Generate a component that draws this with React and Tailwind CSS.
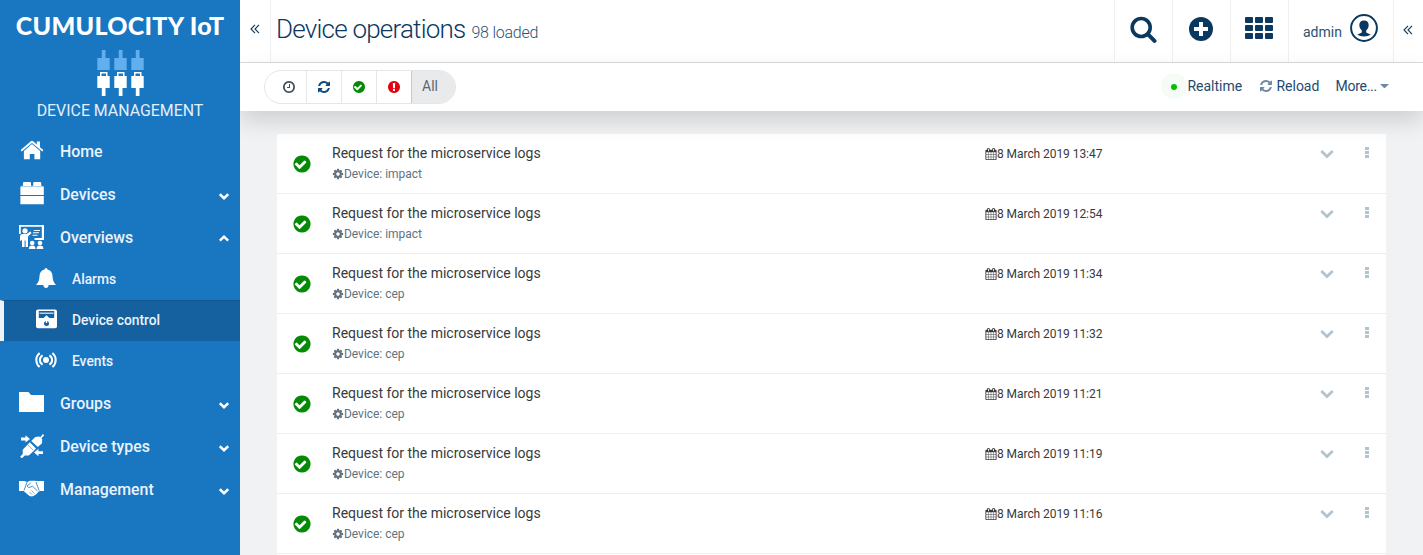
import React from "react";

const PATHS = {
  check:
    "M1284 734q0-28-18-46l-91-90q-19-19-45-19t-45 19l-408 407-226-226q-19-19-45-19t-45 19l-91 90q-18 18-18 46 0 27 18 45l362 362q19 19 45 19 27 0 46-19l543-543q18-18 18-45zm380 162q0 209-103 385.5t-279.5 279.5-385.5 103-385.5-103-279.5-279.5-103-385.5 103-385.5 279.5-279.5 385.5-103 385.5 103 279.5 279.5 103 385.5z",
  refresh:
    "M1639 1056q0 5-1 7-64 268-268 434.5t-478 166.5q-146 0-282.5-55t-243.5-157l-129 129q-19 19-45 19t-45-19-19-45v-448q0-26 19-45t45-19h448q26 0 45 19t19 45-19 45l-137 137q71 66 161 102t187 36q134 0 250-65t186-179q11-17 53-117 8-23 30-23h192q13 0 22.5 9.5t9.5 22.5zm25-800v448q0 26-19 45t-45 19h-448q-26 0-45-19t-19-45 19-45l138-138q-148-137-349-137-134 0-250 65t-186 179q-11 17-53 117-8 23-30 23h-199q-13 0-22.5-9.5t-9.5-22.5v-7q65-268 270-434.5t480-166.5q146 0 284 55.5t245 156.5l130-129q19-19 45-19t45 19 19 45z",
  alert:
    "M896 128q209 0 385.5 103t279.5 279.5 103 385.5-103 385.5-279.5 279.5-385.5 103-385.5-103-279.5-279.5-103-385.5 103-385.5 279.5-279.5 385.5-103zm128 1247v-190q0-14-9-23.5t-22-9.500h-192q-13 0-23 10t-10 23v190q0 13 10 23t23 10h192q13 0 22-9.500t9-23.500zm-2-344l18-621q0-12-10-18-10-8-24-8h-220q-14 0-24 8-10 6-10 18l17 621q0 10 10 17.500t24 7.500h185q14 0 23.500-7.500t10.500-17.500z",
  clock:
    "M1024 544v448q0 14-9 23t-23 9h-320q-14 0-23-9t-9-23v-64q0-14 9-23t23-9h224v-352q0-14 9-23t23-9h64q14 0 23 9t9 23zm416 352q0-148-73-273t-198-198-273-73-273 73-198 198-73 273 73 273 198 198 273 73 273-73 198-198 73-273zm224 0q0 209-103 385.5t-279.5 279.5-385.5 103-385.5-103-279.5-279.5-103-385.5 103-385.5 279.5-279.5 385.5-103 385.5 103 279.5 279.5 103 385.5z",
  cog: "M1152 896q0-106-75-181t-181-75-181 75-75 181 75 181 181 75 181-75 75-181zm512-109v222q0 12-8 23t-20 13l-185 28q-19 54-39 91 35 50 107 138 10 12 10 25t-9 23q-27 37-99 108t-94 71q-12 0-26-9l-138-108q-44 23-91 38-16 136-29 186-7 28-36 28h-222q-14 0-24.5-8.5t-11.5-21.5l-28-184q-49-16-90-37l-141 107q-10 9-25 9-14 0-25-11-126-114-165-168-7-10-7-23 0-12 8-23 15-21 51-66.5t54-70.5q-27-50-41-99l-183-27q-13-2-21-12.5t-8-23.5v-222q0-12 8-23t19-13l186-28q14-46 39-92-40-57-107-138-10-12-10-24 0-10 9-23 26-36 98.5-107.5t94.5-71.5q13 0 26 10l138 107q44-23 91-38 16-136 29-186 7-28 36-28h222q14 0 24.5 8.5t11.5 21.5l28 184q49 16 90 37l142-107q9-9 24-9 13 0 25 10 129 119 165 170 7 8 7 22 0 12-8 23-15 21-51 66.5t-54 70.5q26 50 41 98l183 28q13 2 21 12.5t8 23.5z",
  calendar:
    "M192 1664h288v-288h-288v288zm352 0h320v-288h-320v288zm-352-352h288v-320h-288v320zm352 0h320v-320h-320v320zm-352-384h288v-288h-288v288zm736 736h320v-288h-320v288zm-384-736h320v-288h-320v288zm768 736h288v-288h-288v288zm-384-352h320v-320h-320v320zm-352-864v-288q0-13-9.5-22.5t-22.5-9.5h-64q-13 0-22.5 9.5t-9.5 22.5v288q0 13 9.5 22.5t22.5 9.5h64q13 0 22.5-9.5t9.5-22.5zm736 864h288v-320h-288v320zm-384-384h320v-288h-320v288zm384 0h288v-288h-288v288zm32-480v-288q0-13-9.5-22.5t-22.5-9.5h-64q-13 0-22.5 9.5t-9.5 22.5v288q0 13 9.5 22.5t22.5 9.5h64q13 0 22.5-9.5t9.5-22.5zm384-64v1280q0 52-38 90t-90 38h-1408q-52 0-90-38t-38-90v-1280q0-52 38-90t90-38h128v-96q0-66 47-113t113-47h64q66 0 113 47t47 113v96h384v-96q0-66 47-113t113-47h64q66 0 113 47t47 113v96h128q52 0 90 38t38 90z",
};

const Glyph = ({ name, className }) => (
  <svg viewBox="0 0 1792 1792" fill="currentColor" className={className}>
    <path d={PATHS[name]} />
  </svg>
);

const Chevron = ({ up }) => (
  <svg viewBox="0 0 10 8" className="h-2 w-2.5" fill="none" stroke="currentColor" strokeWidth="2.500">
    <path d={up ? "M.8 5.700 5 1.700l4.200 4" : "M.8 2.200 5 6.200l4.200-4"} />
  </svg>
);

const DoubleAngle = () => (
  <svg viewBox="0 0 10 10" className="h-2.5 w-2.5" fill="none" stroke="currentColor" strokeWidth="1.1">
    <path d="M5 .8 1 5l4 4.200M9 .8 5 5l4 4.200" />
  </svg>
);

const Svg24 = ({ children, className = "size-6" }) => (
  <svg viewBox="0 0 24 24" className={className} fill="currentColor">
    {children}
  </svg>
);

const HomeIcon = () => (
  <Svg24>
    <path d="M.6 11.100 10.600 2.400Q12 1.300 13.400 2.400L16.800 5.400V2.500h3.200v5.700l3.400 2.900-1.100 1.400L12 3.900 1.700 12.500z" />
    <path d="M12 5.100 20.200 12v8.300h-5.800v-5.200H9.800v5.200H3.900V12z" />
  </Svg24>
);

const DevicesIcon = () => (
  <Svg24>
    <path d="M3 4V1q0-1 1-1h6q1 0 1 1v3zM13.200 4V1q0-1 1-1h6q1 0 1 1v3z" />
    <path d="M.4 4.600h23.400V13H.4zM.4 13.900h23.400v8.300H.4z" />
    <path d="M1.500 3.600h21v1H1.500z" opacity=".55" />
  </Svg24>
);

const OverviewsIcon = () => (
  <svg viewBox="0 0 25 24" className="-ml-px h-6 w-[25px]" fill="currentColor">
    <path d="M0 0h25v1.800H0zM0 0h1.800v9H0zM22.800 0H25v15h-9.500v-2h7.300z" />
    <circle cx="6" cy="5.800" r="2.600" />
    <path d="M1 11.800q0-2.600 2.600-2.800h4l3.700-2.600 1.300 1.600L9 11.500V22H6.600v-6.500h-1V22H3v-7L1 16z" />
    <path d="M14.800 5H21v1h-6.200zM14 7.300h6v1h-6zM13.500 9.800h5v1h-5z" />
    <circle cx="13.200" cy="18" r="2.300" />
    <circle cx="21" cy="18" r="2.300" />
    <path d="M9.800 24q0-3.400 3.400-3.400t3.400 3.400zM17.600 24q0-3.400 3.400-3.400t3.400 3.400z" />
  </svg>
);

const BellIcon = () => (
  <svg viewBox="0 0 20 20" className="size-5" fill="currentColor">
    <path d="M10 0q1.300 0 1.500 1.500 4.700 1.100 5 6.500.3 6.200 3.100 8.200v.9H.4v-.9Q3.200 14.200 3.500 8q.3-5.400 5-6.500Q8.700 0 10 0zM7.300 17h5.400Q12.300 20 10 20t-2.700-3z" />
  </svg>
);

const ControlIcon = () => (
  <svg viewBox="0 0 21 20" className="h-5 w-[21px]">
    <rect x="0" y=".5" width="21" height="18.800" rx="2" fill="currentColor" />
    <path d="M2.800 2h15.400v7h-4.700L10.500 6.500 7.500 9H2.800z" fill="#1561a0" />
    <path d="M3.500 3.500h14V5h-14z" fill="currentColor" opacity=".7" />
    <path d="M10.500 6.300l2 3h-4z" fill="currentColor" />
    <circle cx="10.500" cy="14.500" r="2.500" fill="#1561a0" />
    <path d="M9.800 12h1.400v2H9.800z" fill="currentColor" />
  </svg>
);

const EventsIcon = () => (
  <svg viewBox="0 0 22 16" className="h-4 w-[22px]" fill="none" stroke="currentColor" strokeWidth="2">
    <circle cx="11" cy="8" r="3" fill="currentColor" stroke="none" />
    <path d="M7.600 3.300Q4.900 5 4.900 8t2.700 4.700M14.400 3.300Q17.100 5 17.100 8t-2.700 4.700M4.600.9Q1.300 3.700 1.300 8t3.300 7.100M17.400.9q3.300 2.800 3.300 7.100t-3.300 7.100" />
  </svg>
);

const FolderIcon = () => (
  <svg viewBox="0 0 25 20" className="-mt-0.5 -ml-px h-5 w-[25px]" fill="currentColor">
    <path d="M0 0h9.500L12 3h13v17H0z" />
  </svg>
);

const TypesIcon = () => (
  <Svg24>
    <path d="M1 3.500h4.500V1.200L10 5 5.500 8.600V6.400H1zM23 17.200h-4.500v-2.500L14 18.500l4.500 3.700V20H23z" />
    <path d="M22.900 0l1.300 1.300-2.800 3 .8 1-.2 4-4.200 3.800L11.200 7 15.300 2.900l4-.3 1 .7zM9.800 8.300l6.200 6.200-2.600 2.800L8.800 21.500l-4-.1-3 2.900L.2 22.800l2.600-3-.1-4z" />
    <path d="M10.800 7.300l5.900 6" stroke="#1976c1" strokeWidth=".8" />
    <path d="M8 11l5 5" stroke="#1976c1" strokeWidth=".5" />
  </Svg24>
);

const HandshakeIcon = () => (
  <svg viewBox="0 0 25 17" className="-ml-px h-[17px] w-[25px]" fill="currentColor">
    <path d="M0 1h5.500l2.700.9L11 .8h3.500L19.500 1H25v10h-3.500l-2 .8-2.200 2.400-2 1.200-2.300 1L10.500 16 4.500 11H0z" />
    <g fill="none" stroke="#1976c1" strokeWidth=".8">
      <path d="M8.200 1.900 5 10.500M17 2l3.200 8.700M11.800 2.800 8 6q1.500 2.400 3.800 1l1.700-.8 5 4.800" />
      <path d="M12.500 10.500l3 3M10.500 12l2.700 2.700" strokeWidth=".6" />
    </g>
    <path d="M0 11h4.200l5 5.500H0zM25 11h-3.800L16 17h9z" fill="#1976c1" />
  </svg>
);

const Plug = () => (
  <svg viewBox="0 0 13 46" className="h-[46px] w-[13px]">
    <path d="M4.800 0h3.700v8h4.200v12H.3V8h4.500z" fill="#61afee" />
    <path d="M3 22h7.500v4h2.200v12H8.500v8H4.800v-8H.3V26H3zM4.500 23.500V26H9v-2.500z" fill="#fff" fillRule="evenodd" />
  </svg>
);

const NavItem = ({ icon, label, chevron }) => (
  <div className="flex h-[43px] items-center pr-[11px] pl-5">
    <span className="flex w-10 items-center pb-0.5 text-white">{icon}</span>
    <span className="flex-1 text-[15.900px] leading-6 font-medium tracking-[-0.02px]">{label}</span>
    {chevron && (
      <span className="pt-[3px] text-white">
        <Chevron up={chevron === "up"} />
      </span>
    )}
  </div>
);

const SubItem = ({ icon, label, active }) => (
  <div
    className={
      active
        ? "flex h-[41px] items-center border-t border-l-4 border-t-[#125690] border-l-[#eef2f5] bg-[#1561a0] pb-0.5"
        : "flex h-[41px] items-center border-l-4 border-transparent pb-px"
    }
  >
    <span className="flex w-[68px] justify-center pl-4">
      <span className="flex w-[52px] justify-center pb-[3px] text-white">{icon}</span>
    </span>
    <span className="text-[13.800px] font-medium">{label}</span>
  </div>
);

const Sidebar = () => (
  <aside className="flex h-full w-60 shrink-0 flex-col bg-[#1976c1] text-[#eaf3fb]">
    <div className="flex h-[130px] flex-col items-center text-white">
      <div className="mt-2 h-[34px] text-[25px] leading-[34px] font-black tracking-[0.29px] whitespace-nowrap text-white [font-family:Lato,sans-serif]">
        CUMULOCITY IoT
      </div>
      <div className="mt-2 flex gap-1">
        <Plug />
        <Plug />
        <Plug />
      </div>
      <div className="mt-[5px] text-[15.900px] leading-5 whitespace-nowrap text-[#e4effa]">DEVICE MANAGEMENT</div>
    </div>
    <NavItem icon={<HomeIcon />} label="Home" />
    <NavItem icon={<DevicesIcon />} label="Devices" chevron="down" />
    <NavItem icon={<OverviewsIcon />} label="Overviews" chevron="up" />
    <SubItem icon={<BellIcon />} label="Alarms" />
    <SubItem icon={<ControlIcon />} label="Device control" active />
    <SubItem icon={<EventsIcon />} label="Events" />
    <NavItem icon={<FolderIcon />} label="Groups" chevron="down" />
    <NavItem icon={<TypesIcon />} label="Device types" chevron="down" />
    <NavItem icon={<HandshakeIcon />} label="Management" chevron="down" />
  </aside>
);

const Header = () => (
  <header className="flex h-[63px] shrink-0 border-b border-[#d9dcde] bg-white text-[#0b385f]">
    <div className="flex w-[31px] items-center justify-center border-r border-[#eeeff0] pb-[5px]">
      <DoubleAngle />
    </div>
    <div className="flex flex-1 items-baseline pt-[13px] pl-[5px] whitespace-nowrap">
      <h1 className="text-[26px] leading-8 font-light tracking-[-0.78px]">Device operations</h1>
      <span className="ml-[6px] text-base font-light tracking-[-0.24px] text-[#2c5375]">98 loaded</span>
    </div>
    <div className="flex w-[58px] items-center justify-center border-l border-[#eeeff0] pr-px pb-[3px]">
      <svg viewBox="0 0 27 27" className="size-[27px]" fill="none" stroke="currentColor">
        <circle cx="11.200" cy="11.500" r="9" strokeWidth="3.600" />
        <path d="M17.800 18.200l6.700 6.700" strokeWidth="4" strokeLinecap="round" />
      </svg>
    </div>
    <div className="flex w-[58px] items-center justify-center border-l border-[#eeeff0] pr-0.5 pb-1">
      <svg viewBox="0 0 24 24" className="size-6">
        <circle cx="12" cy="12" r="12" fill="currentColor" />
        <path d="M12 5v14M5 12h14" stroke="#fff" strokeWidth="4" />
      </svg>
    </div>
    <div className="flex w-[58px] items-center justify-center border-l border-[#eeeff0] pr-px pb-[6px]">
      <svg viewBox="0 0 28 22" className="h-[22px] w-7" fill="currentColor">
        {[0, 8, 16].map((y) => [0, 10, 20].map((x) => <rect key={x + "-" + y} x={x} y={y} width="8" height="6" rx="1" />))}
      </svg>
    </div>
    <div className="flex w-[105px] items-center border-l border-[#eeeff0] pb-[6px] pl-3.5">
      <span className="w-[47px] pt-2 text-sm text-[#2c5375]">admin</span>
      <svg viewBox="0 0 28 28" className="size-7">
        <circle cx="14" cy="14" r="12.900" fill="none" stroke="currentColor" strokeWidth="2" />
        <path
          d="M14 6.500q4.700 0 4.700 4.700 0 3.500-2.500 5.400v2l4.600 2.200Q18 22.500 14 22.500t-6.800-1.700l4.600-2.200v-2Q9.300 14.700 9.300 11.200 9.300 6.500 14 6.500z"
          fill="currentColor"
        />
      </svg>
    </div>
    <div className="flex w-[30px] items-center justify-center border-l border-[#eeeff0] pr-px pb-[3px]">
      <DoubleAngle />
    </div>
  </header>
);

const Toolbar = () => (
  <div className="relative z-10 flex h-12 shrink-0 items-start justify-between bg-white pt-[7px] pr-[35px] pl-6 text-sm text-[#1f4a6e] shadow-[0_10px_22px_rgba(0,0,0,0.14)]">
    <div className="flex h-[34px] overflow-hidden rounded-full border border-[#e4e6e8]">
      <span className="flex w-[42px] items-center justify-end border-r border-[#e4e6e8] pr-2.5 text-[#40505c]">
        <Glyph name="clock" className="size-3.5" />
      </span>
      <span className="flex w-[35px] items-center justify-center border-r border-[#e4e6e8] text-[#0e4a80]">
        <Glyph name="refresh" className="size-3.5" />
      </span>
      <span className="flex w-[35px] items-center justify-center border-r border-[#e4e6e8] text-[#048a04]">
        <Glyph name="check" className="size-3.5" />
      </span>
      <span className="flex w-[35px] items-center justify-center border-r border-[#c6c9cc] text-[#e3000f]">
        <Glyph name="alert" className="size-3.5" />
      </span>
      <span className="w-[43px] bg-[#e9eaec] pl-2.5 leading-[31px] text-[#5b6873]">All</span>
    </div>
    <div className="flex h-8 items-center">
      <span className="flex size-[26px] items-center justify-center rounded-full bg-[#f5fcf5] pt-px">
        <span className="size-1.5 rounded-full bg-[#00c000]" />
      </span>
      <span className="w-[72px]">Realtime</span>
      <Glyph name="refresh" className="mr-[3px] size-3.5 text-[#6f8ba3]" />
      <span className="w-[59px]">Reload</span>
      <span className="tracking-[-0.25px]">More...</span>
      <svg viewBox="0 0 8 4" className="mr-[-1px] ml-[3px] h-[4.500px] w-[9px] shrink-0">
        <path d="M0 0h8L4 4z" fill="#6f8ba3" />
      </svg>
    </div>
  </div>
);

const OPERATIONS = [
  ["impact", "13:47"],
  ["impact", "12:54"],
  ["cep", "11:34"],
  ["cep", "11:32"],
  ["cep", "11:21"],
  ["cep", "11:19"],
  ["cep", "11:16"],
];

const Row = ({ device, time }) => (
  <div className="flex h-[60px] shrink-0 items-start border-b border-[#eceeef] bg-white">
    <span className="flex h-[60px] w-[55px] items-center pl-[15px]">
      <Glyph name="check" className="size-5 text-[#048a04]" />
    </span>
    <div className="w-[653px] pt-[9px]">
      <div className="text-sm leading-[21px] text-[#373a3c]">Request for the microservice logs</div>
      <div className="flex items-center text-xs leading-5 tracking-[-0.03px] text-[#62727f]">
        <Glyph name="cog" className="size-3" />
        Device: {device}
      </div>
    </div>
    <div className="flex w-[335px] items-center pt-2.5 text-xs leading-5 tracking-[-0.06px] text-[#373a3c]">
      <Glyph name="calendar" className="size-3" />8 March 2019 {time}
    </div>
    <svg viewBox="0 0 14 10" className="mt-[15px] h-2.5 w-3.5" fill="none" stroke="#b3c3cd" strokeWidth="2.700">
      <path d="M1.300 2 7 7.500 12.700 2" />
    </svg>
    <svg viewBox="0 0 4 12" className="mt-[13px] ml-[31px] h-3 w-1" fill="#b3c3cd" shapeRendering="crispEdges">
      <path d="M0 0h4v3H0zM0 4h4v3H0zM0 8h4v3H0z" />
    </svg>
  </div>
);

export default function App() {
  return (
    <div className="flex h-[555px] w-[1423px] overflow-hidden bg-[#f0f2f4] [font-family:Roboto,sans-serif]">
      <Sidebar />
      <main className="flex min-w-0 flex-1 flex-col overflow-hidden">
        <Header />
        <Toolbar />
        <div className="mx-[37px] mt-[23px] flex min-h-0 flex-1 flex-col overflow-hidden bg-white">
          {OPERATIONS.map(([device, time]) => (
            <Row key={time} device={device} time={time} />
          ))}
        </div>
      </main>
    </div>
  );
}
